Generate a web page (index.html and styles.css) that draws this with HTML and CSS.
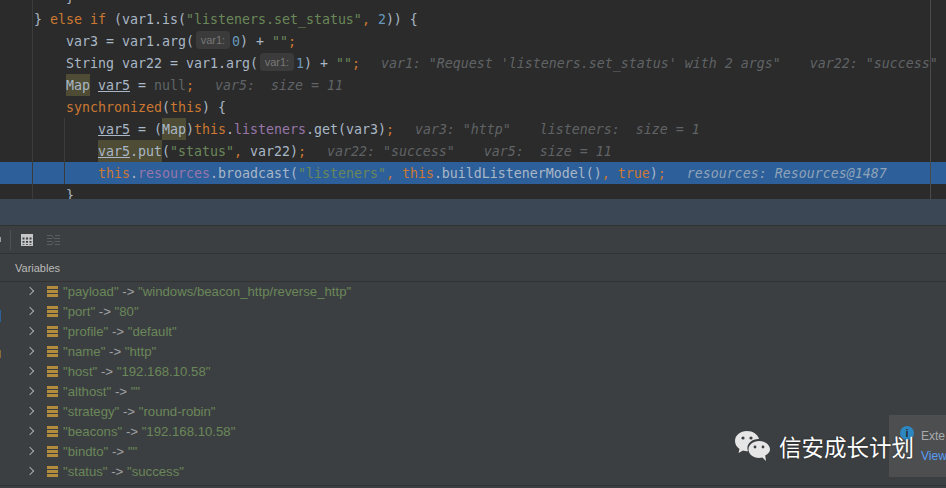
FILE: index.html
```html
<html lang="en">
    <head>
        <title>Debugger</title>
        <link rel="stylesheet" href="styles.css">
    </head>
    <body>
        <div class="editor">
            <div class="guide guide1"></div>
            <div class="guide guide2"></div>
            <div class="margin-line"></div>
            <div class="code">
                <div class="line indent2">}</div>
                <div class="line indent1">} <span class="k">else if</span> (var1.is(<span class="s">"listeners.set_status"</span><span class="k">,</span> <span class="n">2</span>)) {</div>
                <div class="line indent2">var3 = var1.arg(<span class="hint">var1:</span><span class="n">0</span>) + <span class="s">""</span><span class="k">;</span></div>
                <div class="line indent2">String var22 = var1.arg(<span class="hint">var1:</span><span class="n">1</span>) + <span class="s">""</span><span class="k">;</span><span class="val gap1">var1: "Request 'listeners.set_status' with 2 args"</span><span class="val gap2">var22: "success"</span></div>
                <div class="line indent2"><span class="mark">Map</span> <span class="u">var5</span> = <span class="dim">null</span><span class="k">;</span><span class="val gap1">var5:  size = 11</span></div>
                <div class="line indent2"><span class="k">synchronized</span>(<span class="k">this</span>) {</div>
                <div class="line indent3"><span class="u">var5</span> = (<span class="mark">Map</span>)<span class="k">this</span>.<span class="f">listeners</span>.get(var3)<span class="k">;</span><span class="val gap1">var3: "http"</span><span class="val gap2">listeners:  size = 1</span></div>
                <div class="line indent3"><span class="mark"><span class="u">var5</span>.put</span>(<span class="s">"status"</span><span class="k">,</span> var22)<span class="k">;</span><span class="val gap1">var22: "success"</span><span class="val gap2">var5:  size = 11</span></div>
                <div class="line indent3 current"><span class="k">this</span>.<span class="f">resources</span>.broadcast(<span class="s">"listeners"</span><span class="k">,</span> <span class="k">this</span>.buildListenerModel()<span class="k">,</span> <span class="k">true</span>)<span class="k">;</span><span class="val gap1">resources: Resources@1487</span></div>
                <div class="line indent2">}</div>
            </div>
        </div>
        <div class="splitter"></div>
        <div class="panel">
            <div class="toolbar">
                <span class="chev-cut"></span>
                <span class="tool-sep"></span>
                <svg class="tool-icon" width="12" height="12" viewBox="0 0 12 12">
                    <path fill="#c4c6c8" fill-rule="evenodd" d="M0 0h12v12H0zM1.500 3.500v2h2v-2zM5 3.500v2h2v-2zM8.500 3.500v2h2v-2zM1.500 7v1.700h2V7zM5 7v1.700h2V7zM8.500 7v1.700h2V7zM1.500 10v.7h2V10zM5 10v.7h2V10zM8.500 10v.7h2V10z"/>
                </svg>
                <svg class="tool-icon dim-icon" width="13" height="12" viewBox="0 0 13 12">
                    <path fill="none" stroke="#5c5f61" stroke-width="1" d="M0 1.500h5l2 3h6M0 4.500h5M8 1.500h5M0 7.500h5M8 7.500h5M0 10.500h5l2-3M8 10.500h5"/>
                </svg>
            </div>
            <div class="tab-head">Variables</div>
            <div class="tree">
                <div class="row"><span class="chev"></span><span class="entry"><i></i><i></i><i></i></span><span class="label"><span class="s">"payload"</span> <span class="arrow">-&gt;</span> <span class="s">"windows/beacon_http/reverse_http"</span></span></div>
                <div class="row"><span class="chev"></span><span class="entry"><i></i><i></i><i></i></span><span class="label"><span class="s">"port"</span> <span class="arrow">-&gt;</span> <span class="s">"80"</span></span></div>
                <div class="row"><span class="chev"></span><span class="entry"><i></i><i></i><i></i></span><span class="label"><span class="s">"profile"</span> <span class="arrow">-&gt;</span> <span class="s">"default"</span></span></div>
                <div class="row"><span class="chev"></span><span class="entry"><i></i><i></i><i></i></span><span class="label"><span class="s">"name"</span> <span class="arrow">-&gt;</span> <span class="s">"http"</span></span></div>
                <div class="row"><span class="chev"></span><span class="entry"><i></i><i></i><i></i></span><span class="label"><span class="s">"host"</span> <span class="arrow">-&gt;</span> <span class="s">"192.168.10.58"</span></span></div>
                <div class="row"><span class="chev"></span><span class="entry"><i></i><i></i><i></i></span><span class="label"><span class="s">"althost"</span> <span class="arrow">-&gt;</span> <span class="s">""</span></span></div>
                <div class="row"><span class="chev"></span><span class="entry"><i></i><i></i><i></i></span><span class="label"><span class="s">"strategy"</span> <span class="arrow">-&gt;</span> <span class="s">"round-robin"</span></span></div>
                <div class="row"><span class="chev"></span><span class="entry"><i></i><i></i><i></i></span><span class="label"><span class="s">"beacons"</span> <span class="arrow">-&gt;</span> <span class="s">"192.168.10.58"</span></span></div>
                <div class="row"><span class="chev"></span><span class="entry"><i></i><i></i><i></i></span><span class="label"><span class="s">"bindto"</span> <span class="arrow">-&gt;</span> <span class="s">""</span></span></div>
                <div class="row"><span class="chev"></span><span class="entry"><i></i><i></i><i></i></span><span class="label"><span class="s">"status"</span> <span class="arrow">-&gt;</span> <span class="s">"success"</span></span></div>
            </div>
            <div class="side-mark mark-blue"></div>
            <div class="side-mark mark-orange"></div>
        </div>
        <div class="notice">
            <span class="info">i</span>
            <div class="notice-text">
                <div class="notice-title">Exte</div>
                <div class="notice-link">View</div>
            </div>
        </div>
        <div class="watermark">
            <svg width="37" height="32" viewBox="0 0 37 32">
                <path fill="#e6e6e6" d="M13 1C6 1 1 5.500 1 11c0 3.200 1.700 6 4.500 8L4.500 23l4.500-2.400c1.300.4 2.700.6 4 .6h1c-.4-1.200-.6-2-.6-3 0-5.200 4.800-9.200 11-9.200h.6C23.800 4.400 18.800 1 13 1z"/>
                <path fill="#e6e6e6" d="M25 11c-5.800 0-10.500 3.800-10.500 8.500S19.200 28 25 28c1.200 0 2.300-.2 3.400-.5L32 31l-.8-5.500c2.900-1.600 4.800-3.500 4.800-6C36 14.800 30.800 11 25 11z"/>
                <circle cx="9" cy="8" r="1.600" fill="#3c3f41"/>
                <circle cx="17" cy="8" r="1.600" fill="#3c3f41"/>
                <circle cx="21" cy="17" r="1.400" fill="#3c3f41"/>
                <circle cx="29" cy="17" r="1.400" fill="#3c3f41"/>
            </svg>
            <span class="wm-text">信安成长计划</span>
        </div>
    </body>
</html>
```

FILE: styles.css
```css
html, body {
    margin: 0;
    padding: 0;
}

body {
    position: relative;
    width: 946px;
    height: 488px;
    overflow: hidden;
    background-color: #3c3f41;
}

.editor {
    position: relative;
    height: 199px;
    overflow: hidden;
    background-color: #2b2b2b;
}

.code {
    margin-top: -14px;
    font-family: "DejaVu Sans Mono", monospace;
    font-size: 13.29px;
    color: #a9b7c6;
}

.line {
    height: 22px;
    line-height: 24px;
    white-space: pre;
}

.indent1 {
    padding-left: 34px;
}

.indent2 {
    padding-left: 66px;
}

.indent3 {
    padding-left: 98px;
}

.current {
    background-color: #2d5f9a;
}

.k {
    color: #cc7832;
}

.s {
    color: #6a8759;
}

.n {
    color: #6897bb;
}

.f {
    color: #9876aa;
}

.dim {
    color: #5f6468;
}

.u {
    text-decoration: underline;
}

.mark {
    display: inline-block;
    height: 22px;
    background-color: #4e4c34;
}

.hint {
    display: inline-block;
    width: 34px;
    height: 18px;
    margin: 0 2px;
    border-radius: 4px;
    background-color: #3b3b3b;
    color: #787878;
    font-family: "Liberation Sans", sans-serif;
    font-size: 11px;
    line-height: 18px;
    text-align: center;
    vertical-align: 2px;
}

.val {
    color: #606366;
    font-style: italic;
}

.current .val {
    color: #8fa3b8;
}

.gap1 {
    margin-left: 21px;
}

.gap2 {
    margin-left: 29px;
}

.guide {
    position: absolute;
    z-index: 1;
    width: 1px;
    background-color: #3b3b3b;
}

.guide1 {
    left: 32px;
    top: 0;
    height: 199px;
}

.guide2 {
    left: 64px;
    top: 118px;
    height: 66px;
}

.margin-line {
    position: absolute;
    z-index: 1;
    left: 930px;
    top: 0;
    width: 1px;
    height: 199px;
    background-color: #4a4a4a;
}

.splitter {
    height: 26px;
    background-color: #3b4754;
    border-bottom: 1px solid #323232;
}

.panel {
    position: relative;
    height: 259px;
    border-bottom: 1px solid #323232;
}

.toolbar {
    display: flex;
    align-items: center;
    height: 27px;
    border-bottom: 1px solid #323232;
}

.chev-cut {
    width: 1px;
    height: 5px;
    background-color: #9a9c9e;
}

.tool-sep {
    width: 1px;
    height: 20px;
    margin-left: 9px;
    background-color: #515151;
}

.tool-icon {
    margin-left: 10px;
}

.dim-icon {
    margin-left: 14px;
}

.tab-head {
    height: 27px;
    padding-left: 15px;
    border-bottom: 1px solid #323232;
    color: #bbbbbb;
    font-family: "Liberation Sans", sans-serif;
    font-size: 11px;
    line-height: 28px;
}

.tree {
    margin-top: -1px;
    font-family: "Liberation Sans", sans-serif;
    font-size: 13.2px;
}

.row {
    display: flex;
    align-items: center;
    height: 20px;
    padding-left: 28px;
}

.label {
    white-space: pre;
}

.row .arrow {
    color: #a0a2a4;
}

.chev {
    width: 5px;
    height: 5px;
    margin-left: -1px;
    border-top: 1.500px solid #a8aaac;
    border-right: 1.500px solid #a8aaac;
    transform: rotate(45deg);
}

.entry {
    display: flex;
    flex-direction: column;
    gap: 1px;
    width: 11px;
    margin-left: 14px;
    margin-right: 5px;
}

.entry i {
    display: block;
    height: 3px;
    background-color: #b28c3c;
}

.side-mark {
    position: absolute;
    left: 0;
    width: 1px;
}

.mark-blue {
    top: 84px;
    height: 12px;
    background-color: #2d5f9a;
}

.mark-orange {
    top: 124px;
    height: 8px;
    background-color: #8a6a3a;
}

.notice {
    position: absolute;
    left: 889px;
    top: 415px;
    display: flex;
    width: 57px;
    height: 62px;
    overflow: hidden;
    background-color: #4c4e50;
}

.info {
    flex: none;
    width: 14px;
    height: 14px;
    margin: 11px 0 0 11px;
    border-radius: 50%;
    background-color: #2d87c0;
    color: #2b2b2b;
    font-family: "Liberation Sans", sans-serif;
    font-size: 11px;
    font-weight: bold;
    line-height: 14px;
    text-align: center;
}

.notice-text {
    flex: none;
    margin: 11px 0 0 7px;
    font-family: "Liberation Sans", sans-serif;
    font-size: 12px;
    line-height: 20px;
    color: #a9abad;
}

.notice-link {
    color: #589df6;
}

.watermark {
    position: absolute;
    z-index: 2;
    left: 734px;
    top: 430px;
    display: flex;
    align-items: center;
    gap: 8px;
    color: #ffffff;
}

.wm-text {
    font-family: "Noto Sans CJK SC", sans-serif;
    font-size: 22.500px;
    line-height: 32px;
    text-shadow: 0 0 2px rgba(0, 0, 0, 0.5);
}
```
